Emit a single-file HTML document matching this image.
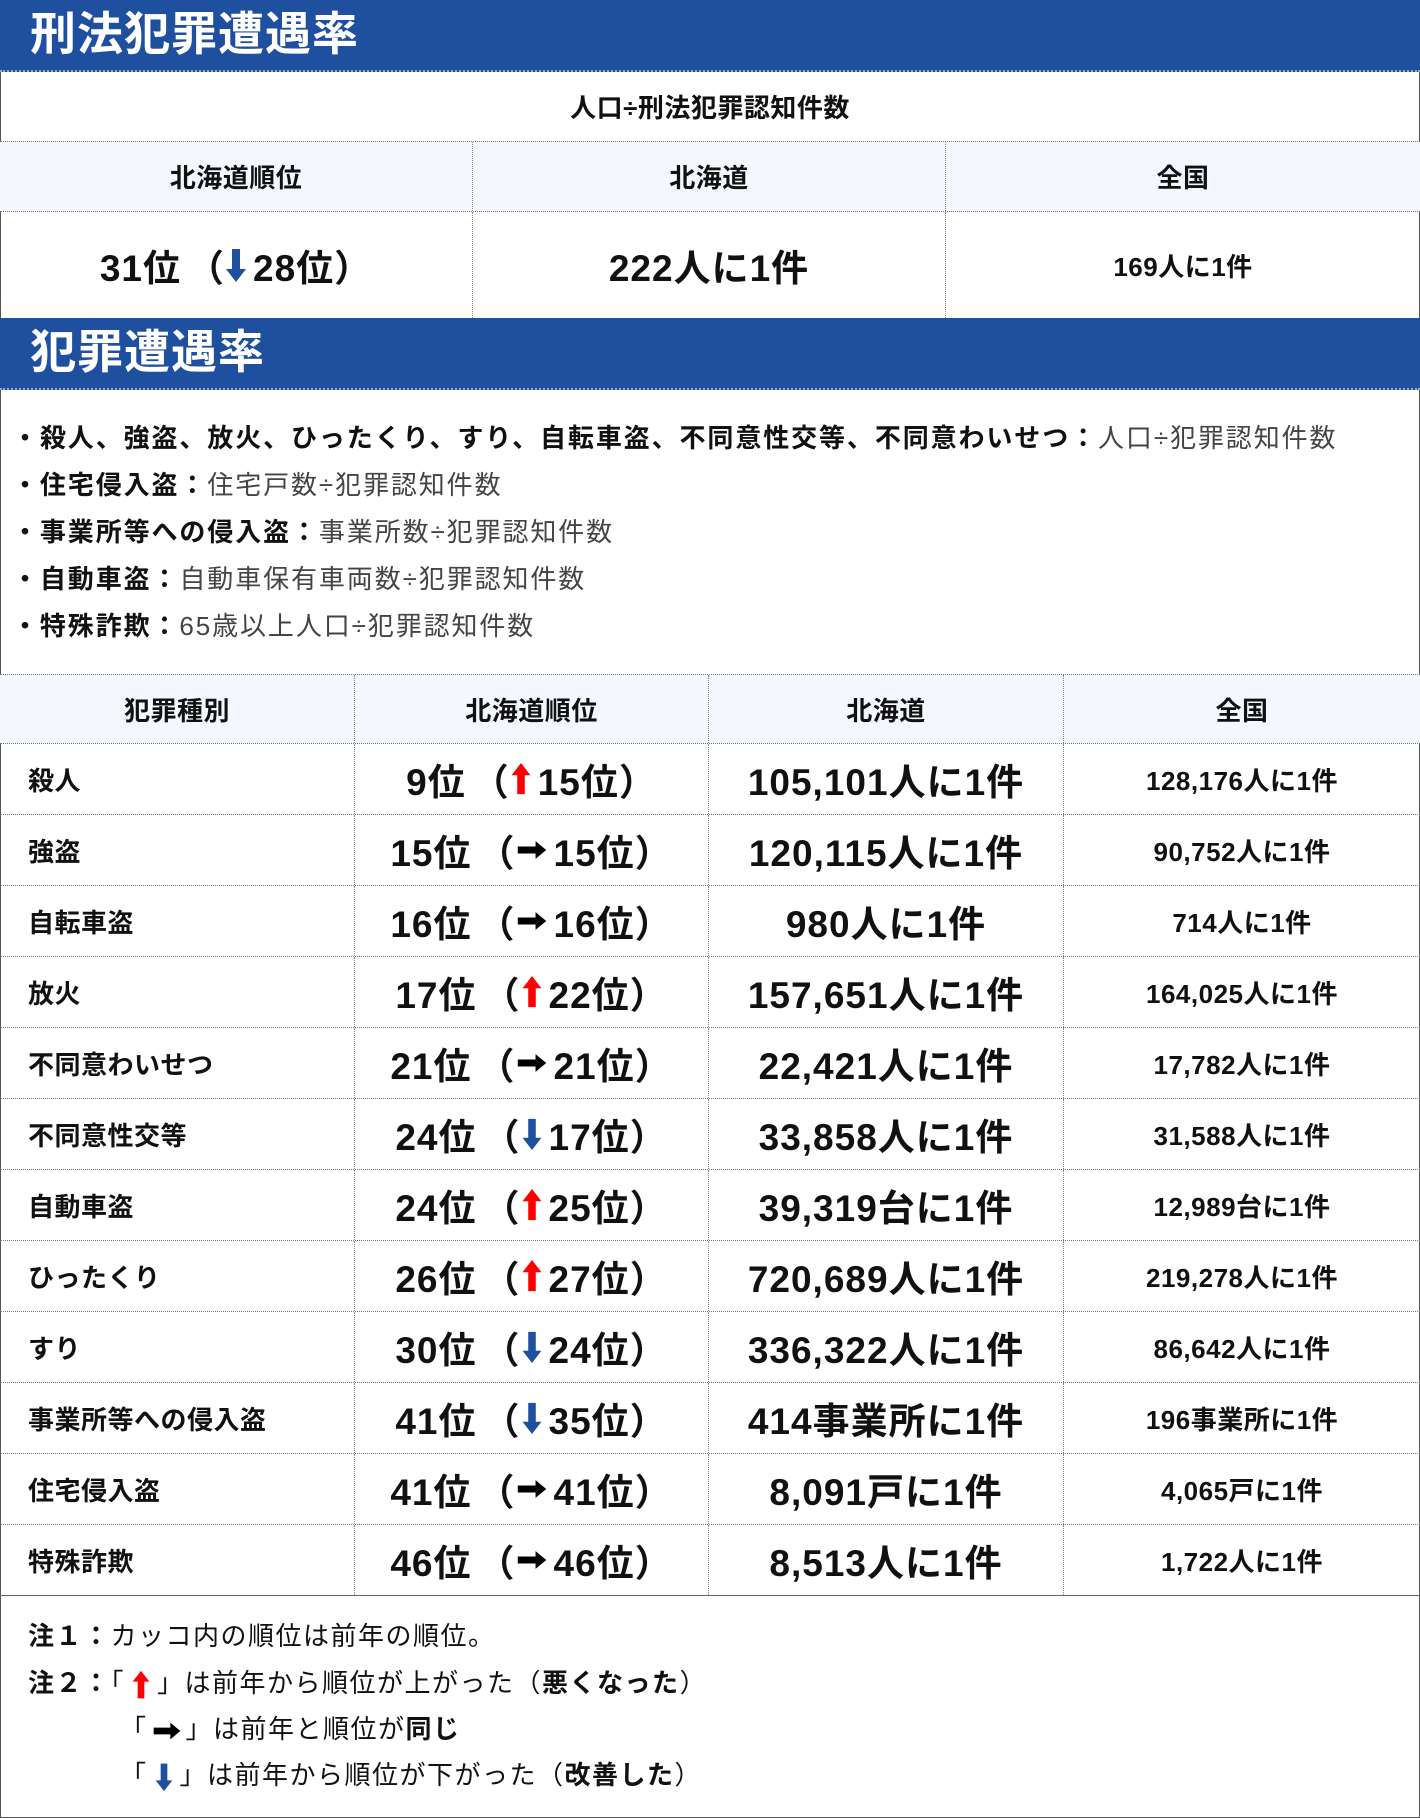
<!DOCTYPE html>
<html><head><meta charset="utf-8"><style>
*{margin:0;padding:0;box-sizing:border-box}
body{width:1420px;height:1818px;background:#fff;font-family:"Liberation Sans","Noto Sans CJK JP",sans-serif;color:#111;position:relative;overflow:hidden}
.frame{position:absolute;left:0;top:0;width:1420px;height:1818px;border:1px solid #555}
.bar{position:absolute;left:0;width:1420px;height:72px;background:#1f4f9f;color:#fff;font-weight:bold;font-size:46px;letter-spacing:1px;line-height:68px;padding-left:30px;border-bottom:2px dotted #9ab}
.row{position:absolute;left:0;width:1420px;display:flex;border-bottom:1px dotted #777}
.c{display:flex;align-items:center;justify-content:center;font-weight:bold;border-right:1px dotted #888;height:100%;white-space:nowrap}
.c:last-child{border-right:none}
.h{background:#f4f8fe}
.l{justify-content:flex-start;padding-left:28px}
.big{font-size:37px;letter-spacing:1px}
.med{font-size:26px;letter-spacing:0.5px}
.b{position:absolute;left:12px;font-size:26px;font-weight:bold;white-space:nowrap;letter-spacing:1.9px}
.b span{font-weight:normal;color:#444}
.n{position:absolute;left:28px;font-size:26px;white-space:nowrap;letter-spacing:1.5px}
.n b{font-weight:bold}
.p{margin-left:6px}
.q{margin-right:6px}
svg{vertical-align:middle}
</style></head><body>
<div class="frame"></div>
<div class="bar" style="top:0">刑法犯罪遭遇率</div>
<div class="row" style="top:72px;height:70px"><div class="c med" style="width:1420px">人口÷刑法犯罪認知件数</div></div>
<div class="row h" style="top:142px;height:70px"><div class="c med" style="width:473px">北海道順位</div><div class="c med" style="width:473px">北海道</div><div class="c med" style="width:474px">全国</div></div>
<div class="row" style="top:212px;height:106px;border-bottom:none"><div class="c big" style="width:473px">31位<span class="p">（</span><svg class="q" width="22" height="36" viewBox="0 0 22 36"><path d="M7 2h8v20h6L11 35 1 22h6z" fill="#1f4f9f"/></svg>28位）</div><div class="c big" style="width:473px">222人に1件</div><div class="c med" style="width:474px">169人に1件</div></div>
<div class="bar" style="top:318px">犯罪遭遇率</div>
<div class="b" style="top:418px">・殺人、強盗、放火、ひったくり、すり、自転車盗、不同意性交等、不同意わいせつ：<span>人口÷犯罪認知件数</span></div>
<div class="b" style="top:465px">・住宅侵入盗：<span>住宅戸数÷犯罪認知件数</span></div>
<div class="b" style="top:512px">・事業所等への侵入盗：<span>事業所数÷犯罪認知件数</span></div>
<div class="b" style="top:559px">・自動車盗：<span>自動車保有車両数÷犯罪認知件数</span></div>
<div class="b" style="top:606px">・特殊詐欺：<span>65歳以上人口÷犯罪認知件数</span></div>
<div class="row h" style="top:674px;height:70px;border-top:1px dotted #777"><div class="c med" style="width:355px">犯罪種別</div><div class="c med" style="width:354px">北海道順位</div><div class="c med" style="width:355px">北海道</div><div class="c med" style="width:356px">全国</div></div>
<div id="rows"></div>
<div class="n" style="top:1616px"><b>注１：</b>カッコ内の順位は前年の順位。</div>
<div class="n" style="top:1663px"><b>注２：</b>「<svg style="margin:0 6px" width="20" height="30" viewBox="0 0 22 36"><path d="M7 34h8V14h6L11 1 1 14h6z" fill="#f00"/></svg>」は前年から順位が上がった（<b>悪くなった</b>）</div>
<div class="n" style="top:1709px;left:120px">「<svg style="margin:0 4px" width="30" height="24" viewBox="0 0 36 24"><path d="M2 8h20V2l12 10-12 10v-6H2z" fill="#000"/></svg>」は前年と順位が<b>同じ</b></div>
<div class="n" style="top:1755px;left:120px">「<svg style="margin:0 6px" width="20" height="30" viewBox="0 0 22 36"><path d="M7 2h8v20h6L11 35 1 22h6z" fill="#1f4f9f"/></svg>」は前年から順位が下がった（<b>改善した</b>）</div>
<script>
var U='<svg class="q" width="22" height="34" viewBox="0 0 22 36"><path d="M7 34h8V14h6L11 1 1 14h6z" fill="#f00"/></svg>';
var R='<svg class="q" width="32" height="26" viewBox="0 0 36 24"><path d="M2 8h20V2l12 10-12 10v-6H2z" fill="#000"/></svg>';
var D='<svg class="q" width="22" height="34" viewBox="0 0 22 36"><path d="M7 2h8v20h6L11 35 1 22h6z" fill="#1f4f9f"/></svg>';
var d=[["殺人","9位",U,"15位","105,101人に1件","128,176人に1件"],
["強盗","15位",R,"15位","120,115人に1件","90,752人に1件"],
["自転車盗","16位",R,"16位","980人に1件","714人に1件"],
["放火","17位",U,"22位","157,651人に1件","164,025人に1件"],
["不同意わいせつ","21位",R,"21位","22,421人に1件","17,782人に1件"],
["不同意性交等","24位",D,"17位","33,858人に1件","31,588人に1件"],
["自動車盗","24位",U,"25位","39,319台に1件","12,989台に1件"],
["ひったくり","26位",U,"27位","720,689人に1件","219,278人に1件"],
["すり","30位",D,"24位","336,322人に1件","86,642人に1件"],
["事業所等への侵入盗","41位",D,"35位","414事業所に1件","196事業所に1件"],
["住宅侵入盗","41位",R,"41位","8,091戸に1件","4,065戸に1件"],
["特殊詐欺","46位",R,"46位","8,513人に1件","1,722人に1件"]];
var h='';
d.forEach(function(r,i){var last=i==11?'border-bottom:1px solid #666;':'';
h+='<div class="row" style="top:'+(744+i*71)+'px;height:71px;'+last+'"><div class="c med l" style="width:355px">'+r[0]+'</div><div class="c big" style="width:354px">'+r[1]+'<span class="p">（</span>'+r[2]+r[3]+'）</div><div class="c big" style="width:355px">'+r[4]+'</div><div class="c med" style="width:356px">'+r[5]+'</div></div>';});
document.getElementById('rows').innerHTML=h;
</script>
</body></html>
